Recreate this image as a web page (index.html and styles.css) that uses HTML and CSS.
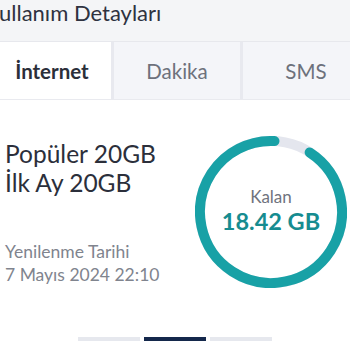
FILE: index.html
```html
<!DOCTYPE html>
<html lang="tr">
<head>
    <meta charset="UTF-8">
    <meta name="viewport" content="width=device-width, initial-scale=1.0">
    <title>Kullanım Detayları</title>
    <link rel="stylesheet" href="styles.css">
</head>
<body>
    <div class="top">
        <h1 class="page-title">Kullanım Detayları</h1>
        <div class="tabs">
            <div class="tab active">İnternet</div>
            <div class="tab">Dakika</div>
            <div class="tab">SMS</div>
        </div>
    </div>

    <div class="usage">
        <div class="package">
            <div class="package-name">
                <div>Popüler 20GB</div>
                <div>İlk Ay 20GB</div>
            </div>
            <div class="renewal">
                <div>Yenilenme Tarihi</div>
                <div>7 Mayıs 2024 22:10</div>
            </div>
        </div>

        <div class="gauge">
            <svg width="152" height="152" viewBox="0 0 152 152">
                <circle cx="76" cy="76" r="71" fill="none" stroke="#e4e6ee" stroke-width="10"/>
                <circle cx="76" cy="76" r="71" fill="none" stroke="#18a1a6" stroke-width="10"
                        stroke-linecap="round" stroke-dasharray="408 500"
                        transform="rotate(-57 76 76)"/>
            </svg>
            <div class="gauge-text">
                <div class="gauge-label">Kalan</div>
                <div class="gauge-value">18.42 GB</div>
            </div>
        </div>
    </div>

    <div class="pager">
        <span class="dot"></span>
        <span class="dot current"></span>
        <span class="dot"></span>
    </div>
</body>
</html>
```

FILE: styles.css
```css
body {
    font-family: 'Lato', sans-serif;
    background: #fff;
    color: #2d313c;
    margin: 0;
    padding: 0;
    overflow: hidden;
}

.top {
    background: #f4f5f7;
    margin-left: -15px;
}

.page-title {
    margin: 0;
    padding-top: 0;
    height: 41px;
    font-size: 22px;
    line-height: 26px;
    font-weight: normal;
    color: #2e3240;
}

.tabs {
    display: flex;
    border-top: 1px solid #e7e8ed;
    border-bottom: 1px solid #e9eaef;
    height: 57px;
}

.tab {
    width: 129px;
    flex-shrink: 0;
    box-sizing: border-box;
    display: flex;
    align-items: center;
    justify-content: center;
    font-size: 20.5px;
    color: #6d717c;
    background: #f4f5f9;
    border-right: 3px solid #e8e9ef;
}

.tab:first-child {
    padding-left: 8px;
}

.tab.active {
    background: #fff;
    color: #2b2f3a;
    font-weight: bold;
}

.usage {
    display: flex;
    justify-content: space-between;
    padding: 36px 3px 0 5px;
}

.package-name {
    margin-top: 3px;
    font-size: 24.5px;
    line-height: 29px;
    color: #2b2f3b;
}

.renewal {
    margin-top: 43px;
    font-size: 17.5px;
    line-height: 23px;
    color: #80848e;
}

.gauge {
    display: grid;
    width: 152px;
    height: 152px;
}

.gauge svg, .gauge-text {
    grid-area: 1 / 1;
}

.gauge-text {
    display: flex;
    flex-direction: column;
    align-items: center;
    justify-content: center;
    padding-bottom: 4px;
}

.gauge-label {
    font-size: 17px;
    line-height: 22px;
    color: #6f737e;
}

.gauge-value {
    font-size: 23.5px;
    line-height: 27px;
    font-weight: bold;
    color: #168c90;
}

.pager {
    display: flex;
    justify-content: center;
    gap: 4px;
    margin-top: 49px;
}

.dot {
    width: 62px;
    height: 4px;
    background: #e6e8ee;
}

.dot.current {
    background: #14284b;
}
```
